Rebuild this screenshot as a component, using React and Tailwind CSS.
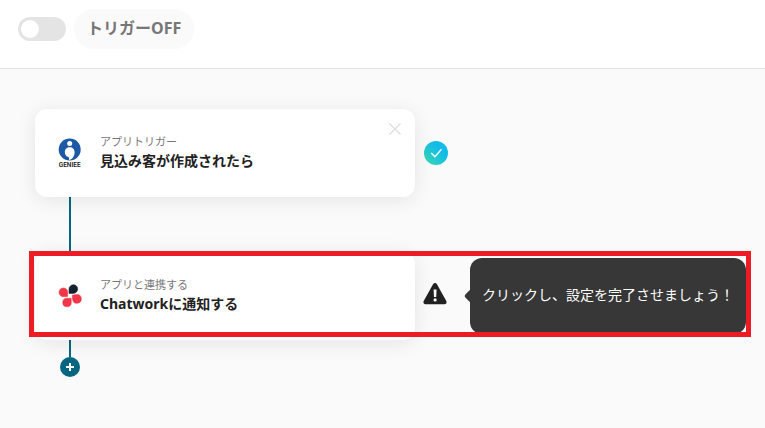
import { useState } from 'react';
import { X } from 'lucide-react';

function GenieeLogo() {
  return (
    <svg viewBox="-1 0 26 32" className="-mx-px h-8 w-[26px]" role="img" aria-label="GENIEE">
      <circle cx="11.700" cy="12.500" r="11" fill="#1d59a5" />
      <circle cx="11.700" cy="6.500" r="2.500" fill="#fff" />
      <path
        d="M11.700 10.300c-2.800 0-4.900 2.100-4.900 4.900 0 2.200 1.300 3.900 3.100 4.600 1.300.5 1.600 1.700.9 3.400 3.400-.8 5.800-4 5.800-8 0-2.800-2.100-4.900-4.900-4.900z"
        fill="#fff"
      />
      <text
        x="11.700"
        y="30"
        textAnchor="middle"
        fontFamily="Roboto, sans-serif"
        fontSize="6.500"
        fontWeight="600"
        fill="#222"
      >
        GENIEE
      </text>
    </svg>
  );
}

function ChatworkLogo() {
  return (
    <svg viewBox="0 0 24 24" className="size-6" strokeWidth="0.500" strokeLinejoin="round" aria-hidden="true">
      <path d="M11 9.400V5.300a4.350 4.350 0 1 1 4.500 4.100z" fill="#14202f" stroke="#14202f" />
      <g fill="#f03748" stroke="#f03748">
        <path d="M9.700 12.400l-4.200.3A4.400 4.400 0 1 1 9.800 8.300z" />
        <path d="M13.200 14.200l.1 4.500a4.300 4.300 0 1 1-4.400-4.500z" />
        <path d="M14.200 11.200l4.200-.7a4.400 4.400 0 1 1-3.800 5.200z" />
      </g>
    </svg>
  );
}

function CheckBadge() {
  return (
    <svg viewBox="0 0 24 24" className="size-6" role="img" aria-label="完了">
      <defs>
        <linearGradient id="done" x1="0" y1="1" x2="1" y2="0">
          <stop offset="0.1" stopColor="#35d6b5" />
          <stop offset="0.65" stopColor="#12bce8" />
        </linearGradient>
      </defs>
      <circle cx="12" cy="12" r="12" fill="url(#done)" />
      <path d="M7.200 12l3.700 3.700 6.600-7.400" fill="none" stroke="#fff" strokeWidth="1.300" />
    </svg>
  );
}

function WarningIcon() {
  return (
    <svg viewBox="0 2 24 24" className="size-6 overflow-visible" role="img" aria-label="未設定">
      <path
        d="M10.200 1.900a2.200 2.200 0 0 1 3.600 0l9.500 17c.8 1.600-.1 3.300-1.900 3.300H2.600c-1.800 0-2.700-1.700-1.900-3.300z"
        fill="#222"
      />
      <path d="M10.600 7.600h3l-.4 7.400h-2.200z" fill="#fff" />
      <circle cx="12.100" cy="17.900" r="1.600" fill="#fff" />
    </svg>
  );
}

function StepCard({ logo, label, title, onClose }) {
  return (
    <div className="relative flex h-[88px] w-[380px] shrink-0 items-center gap-[18px] rounded-xl bg-white pl-[23px] shadow-[0_3px_20px_rgba(0,0,0,0.09)]">
      {logo}
      <div className="pb-1">
        <p className="text-[11px] leading-5 text-[#777]">{label}</p>
        <h2 className="text-sm leading-[18px] font-bold text-[#222]">{title}</h2>
      </div>
      {onClose ? (
        <button type="button" aria-label="閉じる" onClick={onClose} className="absolute top-[9px] right-[9px] text-[#ddd]">
          <X size={22} strokeWidth={1.4} strokeLinecap="butt" />
        </button>
      ) : null}
    </div>
  );
}

export default function App() {
  const [enabled, setEnabled] = useState(false);

  return (
    <main className="flex min-h-screen flex-col bg-[#fafafa] font-['Noto_Sans','Noto_Sans_CJK_JP',sans-serif]">
      <header className="flex items-center gap-2 border-b border-[#e2e2e2] bg-white px-[18px] pt-[9px] pb-[19px]">
        <input
          id="trigger"
          type="checkbox"
          role="switch"
          checked={enabled}
          onChange={(e) => setEnabled(e.target.checked)}
          className="h-6 w-12 appearance-none rounded-full bg-[#e4e4e4] p-[3px] before:block before:size-[18px] before:rounded-full before:bg-white checked:bg-[#04677f] checked:before:ml-6"
        />
        <label
          htmlFor="trigger"
          className="flex h-10 items-center rounded-full bg-[#fafafa] px-[13px] pb-0.5 text-base leading-6 font-bold text-[#777]"
        >
          {enabled ? 'トリガーON' : 'トリガーOFF'}
        </label>
      </header>

      <section className="flex flex-col pt-10 pr-[14px] pl-[35px]">
        <div className="flex items-center gap-[9px]">
          <StepCard
            logo={<GenieeLogo />}
            label="アプリトリガー"
            title="見込み客が作成されたら"
            onClose={() => {}}
          />
          <CheckBadge />
        </div>

        <div className="ml-[34px] h-[55px] w-0.5 bg-[#04677f]" />

        <div className="relative flex items-center gap-2 pr-[5px]">
          <StepCard logo={<ChatworkLogo />} label="アプリと連携する" title="Chatworkに通知する" />
          <WarningIcon />
          <div
            role="tooltip"
            className="relative ml-[15px] flex h-[76px] flex-1 items-center rounded-xl bg-[#373737] pb-0.5 pl-3 text-sm text-white"
          >
            <span className="absolute top-1/2 -left-1 size-2.5 -translate-y-1/2 rotate-45 rounded-xs bg-[#373737]" />
            <span className="whitespace-nowrap">クリックし、設定を完了させましょう！</span>
          </div>
          <div className="pointer-events-none absolute -top-px right-0 bottom-[3px] -left-1.5 border-5 border-[#ed1c24]" />
        </div>

        <div className="ml-[34px] h-[17px] w-0.5 bg-[#04677f]" />
        <button
          type="button"
          aria-label="ステップを追加"
          className="ml-[25px] flex size-5 items-center justify-center rounded-full bg-[#04677f] text-white"
        >
          <svg viewBox="0 0 8 8" className="size-2" aria-hidden="true">
            <path d="M4 0v8M0 4h8" stroke="currentColor" strokeWidth="2" />
          </svg>
        </button>
      </section>
    </main>
  );
}
